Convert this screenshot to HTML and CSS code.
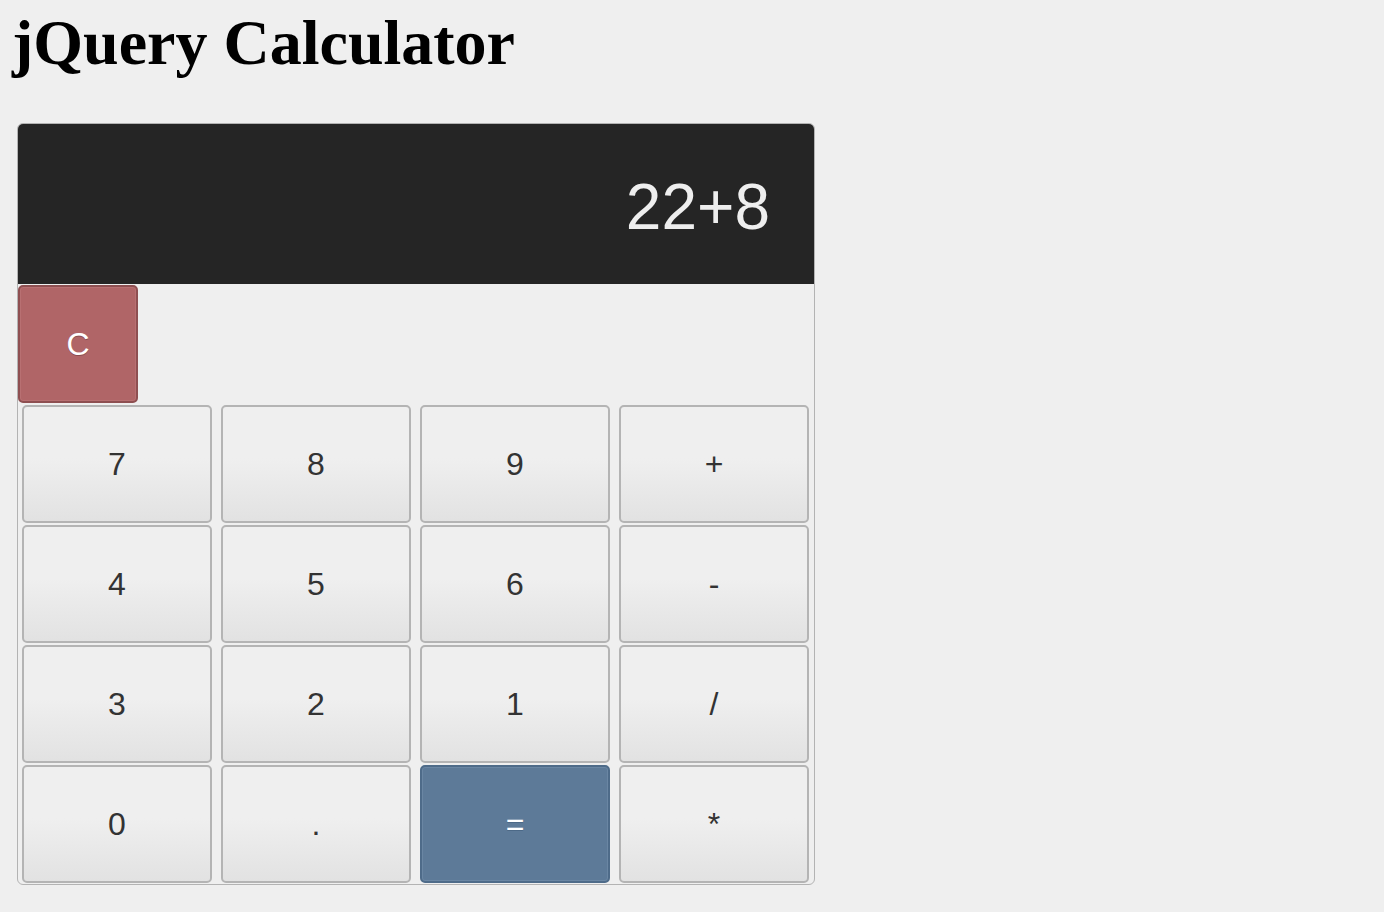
FILE: index.html
```html
<!DOCTYPE html>
<html>
<head>
<meta charset="utf-8">
<title>jQuery Calculator</title>
<link rel="stylesheet" href="styles.css">
</head>
<body>
<h1 class="title">jQuery Calculator</h1>
<div class="calc">
  <div class="display">22+8</div>
  <div class="clear-row"><button class="key key-clear">C</button></div>
  <div class="keys">
    <button class="key">7</button>
    <button class="key">8</button>
    <button class="key">9</button>
    <button class="key">+</button>
    <button class="key">4</button>
    <button class="key">5</button>
    <button class="key">6</button>
    <button class="key">-</button>
    <button class="key">3</button>
    <button class="key">2</button>
    <button class="key">1</button>
    <button class="key">/</button>
    <button class="key">0</button>
    <button class="key">.</button>
    <button class="key key-equals">=</button>
    <button class="key">*</button>
  </div>
</div>
</body>
</html>
```

FILE: styles.css
```css
html, body {
  margin: 0;
  padding: 0;
  background: #efefef;
}

body {
  font-family: "Liberation Sans", Arial, sans-serif;
}

.title {
  font-family: "Liberation Serif", "Times New Roman", serif;
  font-weight: bold;
  font-size: 64px;
  line-height: 71px;
  margin: 7px 0 45px 12px;
  color: #000;
}

.calc {
  width: 796px;
  margin-left: 17px;
  border: 1px solid #b3b3b3;
  border-radius: 6px;
  background: #efefef;
  overflow: hidden;
}

.display {
  height: 160px;
  background: #252525;
  color: #eeeeee;
  font-size: 64px;
  line-height: 160px;
  text-align: right;
  padding: 3px 44px 0 0;
  box-sizing: border-box;
}

.clear-row {
  display: flex;
  padding: 1px 0;
}

.keys {
  display: grid;
  grid-template-columns: repeat(4, 1fr);
}

.key {
  box-sizing: border-box;
  height: 118px;
  margin: 1px 5px 1px 4px;
  border: 2px solid #b4b4b4;
  border-radius: 5px;
  background: linear-gradient(to bottom, #efefef 0%, #efefef 45%, #e2e2e2 100%);
  color: #333;
  font-family: "Liberation Sans", Arial, sans-serif;
  font-size: 32px;
  padding: 0;
  cursor: pointer;
}

.key-clear {
  width: 120px;
  margin: 0;
  background: #b06567;
  border: 2px solid #8e4f51;
  border-radius: 5px;
  color: #fff;
  text-shadow: 0 1px 0 #8a4c4e;
  box-shadow: inset 0 0 0 1px #b87072;
}

.key-equals {
  background: #5d7a98;
  border: 2px solid #4e6b89;
  color: #fff;
  text-shadow: 0 1px 0 #4c6987;
  box-shadow: inset 0 0 0 1px #6a86a3;
}
```
